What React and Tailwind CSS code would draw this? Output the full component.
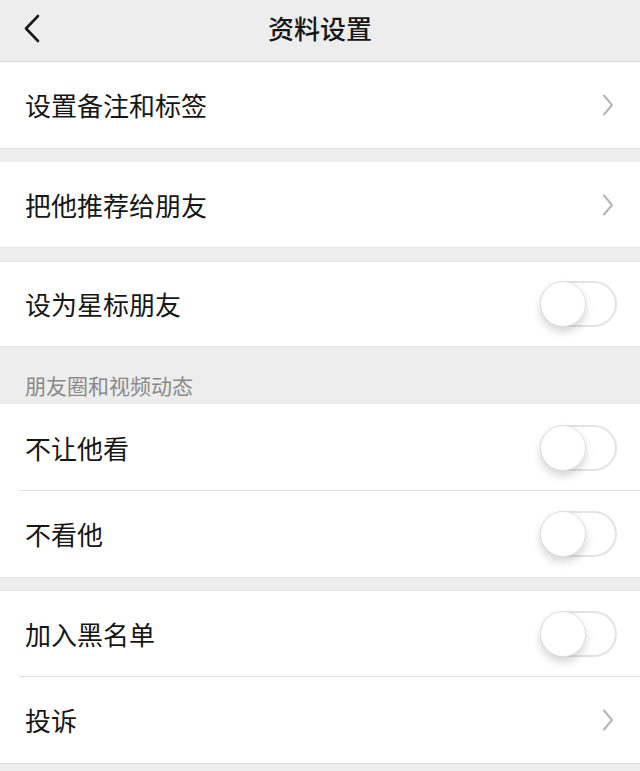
import React from "react";

const font = { fontFamily: '"Noto Sans CJK SC", "Noto Sans", sans-serif' };

function Chevron() {
  return (
    <svg width="12" height="24" viewBox="0 0 12 24" className="mr-[26px]">
      <path d="M2 2.5 L10 12 L2 21.5" fill="none" stroke="#b4b4b4" strokeWidth="2" strokeLinecap="round" strokeLinejoin="round" />
    </svg>
  );
}

function Toggle() {
  return (
    <div className="relative mr-[23px] h-[46px] w-[77px] rounded-full border-2 border-[#e3e3e3] bg-white">
      <div className="absolute left-[-2px] top-[-2px] h-[46px] w-[46px] rounded-full border border-[#e0e0e0] bg-white shadow-[0_5px_8px_rgba(0,0,0,0.16)]" />
    </div>
  );
}

function Row({ label, right, divider, h = "h-[86px]" }) {
  return (
    <div className={`relative flex ${h} items-center justify-between bg-white`}>
      <span className="pl-[25px] text-[26px] leading-none text-[#161616]">{label}</span>
      {right === "toggle" ? <Toggle /> : <Chevron />}
      {divider && <div className="absolute bottom-0 left-[19px] right-0 h-px bg-[#e2e2e2]" />}
    </div>
  );
}

export default function App() {
  return (
    <div className="h-[771px] w-[640px] overflow-hidden bg-[#ededed]" style={font}>
      <div className="relative flex h-[62px] items-center justify-center border-b border-[#d8d8d8] bg-[#ededed] pb-[6px]">
        <svg width="18" height="30" viewBox="0 0 18 30" className="absolute left-[23px] top-[14px]">
          <path d="M15 2 L3 14.5 L15 27" fill="none" stroke="#1a1a1a" strokeWidth="2.6" strokeLinecap="round" strokeLinejoin="round" />
        </svg>
        <span className="text-[26px] font-medium leading-none text-[#161616]">资料设置</span>
      </div>
      <Row label="设置备注和标签" right="chevron" />
      <div className="h-[14px] border-t border-[#e2e2e2]" />
      <Row label="把他推荐给朋友" right="chevron" h="h-[85px]" />
      <div className="h-[15px] border-y border-[#e2e2e2]" />
      <Row label="设为星标朋友" right="toggle" h="h-[84px]" />
      <div className="flex h-[58px] items-end border-t border-[#e2e2e2] pb-[5px] pl-[25px]">
        <span className="text-[21px] leading-[28px] text-[#8a8a8a]">朋友圈和视频动态</span>
      </div>
      <Row label="不让他看" right="toggle" divider h="h-[87px]" />
      <Row label="不看他" right="toggle" h="h-[86px]" />
      <div className="h-[14px] border-y border-[#e2e2e2]" />
      <Row label="加入黑名单" right="toggle" divider h="h-[86px]" />
      <Row label="投诉" right="chevron" h="h-[86px]" />
      <div className="border-t border-[#dcdcdc]" />
    </div>
  );
}
